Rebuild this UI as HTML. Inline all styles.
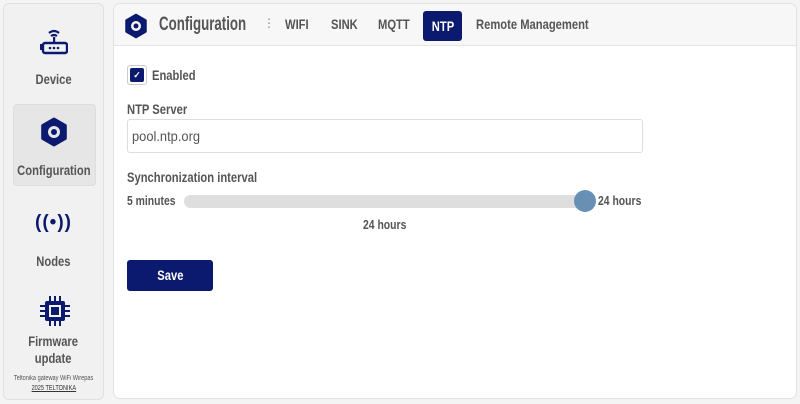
<!DOCTYPE html>
<html><head><style>
*{box-sizing:border-box;margin:0;padding:0}
body{width:800px;height:404px;background:#f4f4f4;font-family:"Liberation Sans",sans-serif;color:#555;position:relative;overflow:hidden;font-weight:bold}
.a{position:absolute;white-space:nowrap}
.s{display:inline-block;transform:scaleX(.8);transform-origin:left}
.c{display:inline-block;transform:scaleX(.8);transform-origin:center}
#side{left:3px;top:3px;width:101px;height:397px;background:#f1f1f1;border:1px solid #e0e0e0;border-radius:6px}
.lbl{position:absolute;width:99px;text-align:center;font-size:14px;color:#555}
#main{left:113px;top:3px;width:684px;height:396px;background:#fff;border:1px solid #e2e2e2;border-radius:7px;overflow:hidden}
#hdr{left:0;top:0;width:684px;height:42px;background:#f7f7f7;border-bottom:1px solid #e4e4e4}
.tab{position:absolute;top:12px;font-size:14px;color:#555}
</style></head><body>
<div id="side" class="a">
  <svg class="a" style="left:36px;top:22px" width="28" height="30" viewBox="0 0 28 30"><path d="M9 7 Q14 3 19 7" stroke="#0b1a6e" stroke-width="2.2" fill="none"/><path d="M11 10 Q14 8 17 10" stroke="#0b1a6e" stroke-width="2.2" fill="none"/><rect x="13" y="11" width="2.2" height="7" fill="#0b1a6e"/><rect x="3" y="17" width="24" height="10" rx="2" fill="none" stroke="#0b1a6e" stroke-width="2.4"/><circle cx="10" cy="22" r="1.3" fill="#0b1a6e"/><circle cx="14" cy="22" r="1.3" fill="#0b1a6e"/><circle cx="18" cy="22" r="1.3" fill="#0b1a6e"/><rect x="0" y="18" width="2.5" height="6" fill="#0b1a6e"/></svg>
  <div class="lbl" style="top:67px"><span class="c">Device</span></div>
  <div class="a" style="left:9px;top:100px;width:83px;height:82px;background:#e6e6e6;border:1px solid #ddd;border-radius:4px"></div>
  <svg class="a" style="left:36px;top:113px" width="28" height="30" viewBox="-14 -15 28 30"><path d="M0 -13 L11.3 -6.5 L11.3 6.5 L0 13 L-11.3 6.5 L-11.3 -6.5Z" fill="#0b1a6e" stroke="#0b1a6e" stroke-width="3" stroke-linejoin="round"/><circle r="6" fill="#e6e6e6"/><circle r="3" fill="#0b1a6e"/></svg>
  <div class="lbl" style="top:158px"><span class="c">Configuration</span></div>
  <div class="lbl" style="top:208px;font-size:19px;color:#0b1a6e;letter-spacing:1px">((•))</div>
  <div class="lbl" style="top:249px"><span class="c">Nodes</span></div>
  <svg class="a" style="left:35px;top:291px" width="32" height="34" viewBox="0 0 32 34"><rect x="6" y="6" width="20" height="20" rx="2" fill="#0b1a6e"/><rect x="10" y="10" width="12" height="12" fill="#f1f1f1"/><rect x="12" y="12" width="8" height="8" fill="#0b1a6e"/><g stroke="#0b1a6e" stroke-width="2"><path d="M11 1v5M16 1v5M21 1v5M11 26v5M16 26v5M21 26v5M1 11h5M1 16h5M1 21h5M26 11h5M26 16h5M26 21h5"/></g></svg>
  <div class="lbl" style="top:329px;line-height:17px"><span class="c">Firmware<br>update</span></div>
  <div class="lbl" style="top:371px;font-size:7px;font-weight:normal"><span class="c">Teltonika gateway WiFi Wirepas</span></div>
  <div class="lbl" style="top:381px;font-size:7px;font-weight:normal;color:#333"><span class="c" style="text-decoration:underline">2025 TELTONIKA</span></div>
</div>
<div id="main" class="a">
  <div id="hdr" class="a">
    <svg class="a" style="left:10px;top:9px" width="24" height="26" viewBox="-12 -13 24 26"><path d="M0 -11 L9.5 -5.5 L9.5 5.5 L0 11 L-9.5 5.5 L-9.5 -5.5Z" fill="#0b1a6e" stroke="#0b1a6e" stroke-width="2.5" stroke-linejoin="round"/><circle r="5" fill="#f7f7f7"/><circle r="2.5" fill="#0b1a6e"/></svg>
    <div class="a" style="left:45px;top:10px;font-size:19px;color:#555"><span class="s" style="transform:scaleX(.7)">Configuration</span></div>
    <div class="a" style="left:149px;top:12px;font-size:12px;color:#888;font-weight:normal">⋮</div>
    <div class="tab" style="left:171px"><span class="s">WIFI</span></div>
    <div class="tab" style="left:217px"><span class="s">SINK</span></div>
    <div class="tab" style="left:264px"><span class="s">MQTT</span></div>
    <div class="a" style="left:309px;top:7px;width:39px;height:30px;background:#0b1a6e;border-radius:3px;color:#fff;font-size:14px;text-align:center;line-height:30px"><span class="c">NTP</span></div>
    <div class="tab" style="left:362px"><span class="s">Remote Management</span></div>
  </div>
  <div class="a" style="left:13px;top:61px;width:20px;height:20px;border:1px solid #ccc;border-radius:3px;background:#fff"><div style="margin:2px;width:14px;height:14px;background:#0b1a6e;border-radius:2px;color:#fff;font-size:9px;text-align:center;line-height:14px">✓</div></div>
  <div class="a" style="left:38px;top:63px;font-size:14px"><span class="s">Enabled</span></div>
  <div class="a" style="left:13px;top:97px;font-size:14px"><span class="s">NTP Server</span></div>
  <div class="a" style="left:13px;top:115px;width:516px;height:34px;border:1px solid #ddd;border-radius:3px;font-weight:normal;font-size:14px;padding:8px 4px"><span class="s" style="transform:scaleX(.92)">pool.ntp.org</span></div>
  <div class="a" style="left:13px;top:165px;font-size:14px"><span class="s">Synchronization interval</span></div>
  <div class="a" style="left:13px;top:189px;font-size:13px"><span class="s">5 minutes</span></div>
  <div class="a" style="left:70px;top:191px;width:402px;height:13px;background:#dedede;border-radius:7px"></div>
  <div class="a" style="left:460px;top:186px;width:22px;height:22px;background:#6890b5;border-radius:50%"></div>
  <div class="a" style="left:484px;top:189px;font-size:13px"><span class="s">24 hours</span></div>
  <div class="a" style="left:249px;top:213px;font-size:13px"><span class="s">24 hours</span></div>
  <div class="a" style="left:13px;top:256px;width:86px;height:31px;background:#0b1a6e;border-radius:3px;color:#fff;font-size:14px;text-align:center;line-height:31px"><span class="c">Save</span></div>
</div>
</body></html>
